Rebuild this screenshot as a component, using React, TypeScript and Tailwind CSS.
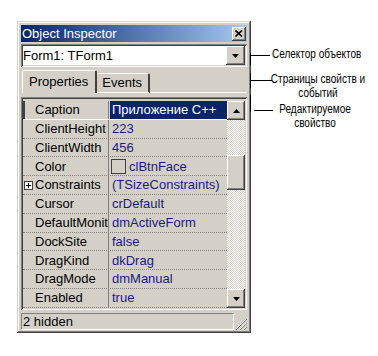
import React from 'react';

const raised =
  'shadow-[inset_-1px_-1px_#404040,inset_1px_1px_#ffffff,inset_-2px_-2px_#808080,inset_2px_2px_#d4d0c8]';
const sunken =
  'shadow-[inset_1px_1px_#808080,inset_-1px_-1px_#ffffff,inset_2px_2px_#404040,inset_-2px_-2px_#d4d0c8]';

interface Prop {
  name: string;
  value: string;
  kind?: 'color' | 'set';
}

const props: Prop[] = [
  { name: 'Caption', value: 'Приложение C++' },
  { name: 'ClientHeight', value: '223' },
  { name: 'ClientWidth', value: '456' },
  { name: 'Color', value: 'clBtnFace', kind: 'color' },
  { name: 'Constraints', value: '(TSizeConstraints)', kind: 'set' },
  { name: 'Cursor', value: 'crDefault' },
  { name: 'DefaultMonitor', value: 'dmActiveForm' },
  { name: 'DockSite', value: 'false' },
  { name: 'DragKind', value: 'dkDrag' },
  { name: 'DragMode', value: 'dmManual' },
  { name: 'Enabled', value: 'true' },
];

function Arrow({ up }: { up?: boolean }) {
  return (
    <svg width="7" height="4" viewBox="0 0 7 4">
      {up ? <path d="M3.5 0 L7 4 L0 4 Z" fill="#000" /> : <path d="M0 0 L7 0 L3.5 4 Z" fill="#000" />}
    </svg>
  );
}

function PropRow({ p, selected }: { p: Prop; selected: boolean }) {
  return (
    <div
      className={`flex h-[18.8px] shrink-0 ${
        selected ? 'border-b border-white' : 'border-b border-dotted border-[#808080]'
      }`}
    >
      {/* name column */}
      <div
        className={`relative w-[85px] shrink-0 flex items-center overflow-hidden whitespace-nowrap pl-[12px] text-black ${
          selected ? 'border-l-2 border-[#404040]' : ''
        }`}
      >
        {p.kind === 'set' && (
          <span className="absolute left-[1px] top-[5px] w-[9px] h-[9px] border border-[#404040] bg-white flex items-center justify-center">
            <svg width="7" height="7" viewBox="0 0 7 7">
              <path d="M1 3.5 H6 M3.5 1 V6" stroke="#000" strokeWidth="1" />
            </svg>
          </span>
        )}
        <span className={selected ? '-ml-[2px]' : ''}>{p.name}</span>
      </div>
      <div className="w-px shrink-0 bg-[#808080]" />
      {/* value column */}
      <div className="flex-1 min-w-0 flex items-center pl-[1px] overflow-hidden whitespace-nowrap">
        {selected ? (
          <div className="h-full w-full bg-[#0a246a] text-white flex items-center pl-[2px]">{p.value}</div>
        ) : p.kind === 'color' ? (
          <div className="flex items-center gap-[3px] pl-[1px] text-[#1a1a80]">
            <span className="w-[15px] h-[15px] border border-[#404040] bg-[#d4d0c8]" />
            {p.value}
          </div>
        ) : (
          <span className="pl-[2px] text-[#1a1a80]">{p.value}</span>
        )}
      </div>
    </div>
  );
}

function Scrollbar() {
  const track =
    'bg-[image:repeating-conic-gradient(#d4d0c8_0_25%,#ffffff_0_50%)] bg-[length:2px_2px]';
  return (
    <div className="w-[18px] shrink-0 flex flex-col">
      <div className={`h-[19px] shrink-0 bg-[#d4d0c8] flex items-center justify-center ${raised}`}>
        <Arrow up />
      </div>
      <div className={`h-[35px] shrink-0 ${track}`} />
      <div className={`h-[35px] shrink-0 bg-[#d4d0c8] ${raised}`} />
      <div className={`flex-1 ${track}`} />
      <div className={`h-[19px] shrink-0 bg-[#d4d0c8] flex items-center justify-center ${raised}`}>
        <Arrow />
      </div>
    </div>
  );
}

function Inspector() {
  return (
    <div
      className={`w-[234px] h-[312px] bg-[#d4d0c8] p-[4px] flex flex-col shadow-[inset_-1px_-1px_#404040,inset_1px_1px_#d4d0c8,inset_-2px_-2px_#808080,inset_2px_2px_#ffffff]`}
    >
      {/* Title bar */}
      <div className="h-[17px] shrink-0 bg-linear-to-r from-[#0a246a] to-[#a6caf0] flex items-center justify-between pl-[1px] pr-[1px]">
        <span className="text-white text-[13px] leading-none">Object Inspector</span>
        <div className={`w-[14px] h-[14px] bg-[#d4d0c8] flex items-center justify-center ${raised}`}>
          <svg width="8" height="7" viewBox="0 0 8 7">
            <path d="M0.5 0.5 L7 6.5 M7 0.5 L0.5 6.5" stroke="#000" strokeWidth="1.6" />
          </svg>
        </div>
      </div>

      {/* Object selector */}
      <div className={`mt-[2px] h-[23px] shrink-0 bg-white flex items-center ${sunken}`}>
        <span className="flex-1 pl-[2px] text-black">Form1: TForm1</span>
        <div className={`w-[19px] h-[19px] mr-[2px] bg-[#d4d0c8] flex items-center justify-center ${raised}`}>
          <Arrow />
        </div>
      </div>

      {/* Tabs */}
      <div className="h-[26px] shrink-0 flex items-end">
        <div className="ml-[1px] h-[23px] pl-[6px] pr-[7px] flex items-center border-l border-t border-white border-r-2 border-r-[#404040] rounded-t-[2px] text-black">
          Properties
        </div>
        <div className="h-[20px] pl-[5px] pr-[6px] flex items-center border-t border-white border-r-2 border-r-[#404040] border-b border-b-white rounded-t-[2px] text-black">
          Events
        </div>
        <div className="flex-1 border-b border-white" />
      </div>

      {/* Property grid */}
      <div className={`mt-[4px] h-[213px] shrink-0 p-[2px] flex ${sunken}`}>
        <div className="flex-1 min-w-0 flex flex-col pt-[2px]">
          {props.map((p, i) => (
            <PropRow key={p.name} p={p} selected={i === 0} />
          ))}
        </div>
        <div className="flex pt-[2px]">
          <Scrollbar />
        </div>
      </div>

      {/* Status bar */}
      <div className="mt-[3px] h-[17px] shrink-0 flex items-center">
        <div className="flex-1 h-full flex items-center pl-[1px] border-l border-t border-[#808080] border-r border-b border-r-white border-b-white text-black">
          2 hidden
        </div>
        <div className="w-[13px] h-full flex items-end justify-end">
          <svg width="12" height="12" viewBox="0 0 12 12">
            <path d="M11 1 L1 11 M11 5 L5 11 M11 9 L9 11" stroke="#ffffff" strokeWidth="1" />
            <path d="M12 1 L1 12 M12 5 L5 12 M12 9 L9 12" stroke="#808080" strokeWidth="1" />
          </svg>
        </div>
      </div>
    </div>
  );
}

export default function App() {
  const note =
    "font-['Liberation_Sans',Arial,sans-serif] text-[12.5px] leading-[13.5px] text-black whitespace-nowrap scale-x-[0.8]";
  return (
    <div className="relative w-[378px] h-[356px] bg-white overflow-hidden font-['Liberation_Sans',Arial,sans-serif] text-[13px]">
      <div className="pt-[21px] pl-[17px]">
        <Inspector />
      </div>

      {/* Leader lines */}
      <svg className="absolute left-0 top-0" width="378" height="356">
        <path d="M250.5 53 V65 M250 55.5 H270" stroke="#000" strokeWidth="1" />
        <path d="M250.5 73 V88 M251 80.5 H272" stroke="#000" strokeWidth="1" />
        <path d="M250.5 95 V112 M254 110.5 H273" stroke="#000" strokeWidth="1" />
      </svg>

      {/* Annotation labels */}
      <div className={`absolute left-[272px] top-[48px] origin-left ${note}`}>Селектор объектов</div>
      <div className={`absolute left-[258px] top-[73px] w-[120px] text-center origin-center ${note}`}>
        Страницы свойств и
        <br />
        событий
      </div>
      <div className={`absolute left-[265px] top-[103px] w-[100px] text-center origin-center ${note}`}>
        Редактируемое
        <br />
        свойство
      </div>
    </div>
  );
}
